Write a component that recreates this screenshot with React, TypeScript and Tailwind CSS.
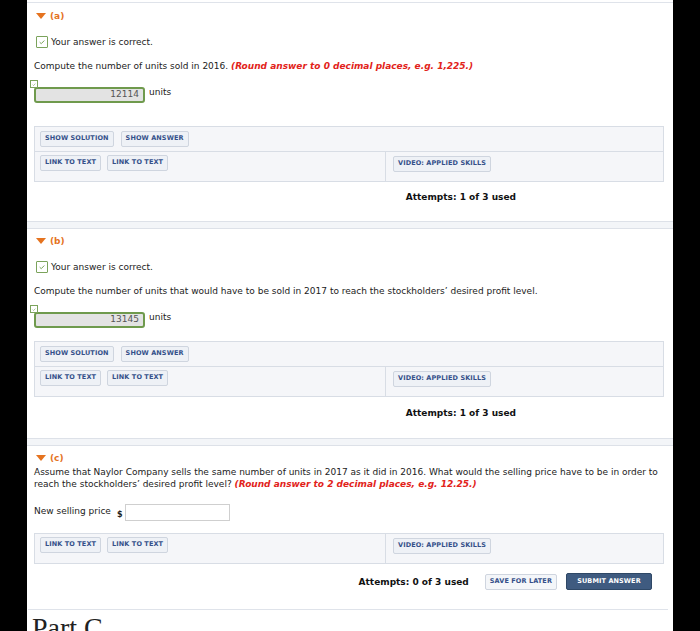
import React from 'react';

// small gray-blue action button
const Btn = ({ children, className = '' }: { children: React.ReactNode; className?: string }) => (
    <div className={`h-[16px] px-[4px] flex items-center rounded-[2px] border border-[#cfd5df] bg-[#eef1f6] text-[#34508a] font-bold text-[6.5px] tracking-[0.1px] whitespace-nowrap ${className}`}>
        {children}
    </div>
);

const Check = ({ size }: { size: number }) => (
    <svg width={size} height={size} viewBox="0 0 12 12" className="block">
        <path d="M3.2 6.2 L5.1 8 L8.8 4.2" fill="none" stroke="#6d9a4b" strokeWidth="1.1" />
    </svg>
);

const Header = ({ label }: { label: string }) => (
    <div className="h-[12px] flex items-center gap-[4px] pl-[2px]">
        <div className="w-0 h-0 border-l-[5px] border-r-[5px] border-t-[6px] border-l-transparent border-r-transparent border-t-[#e5731f]"></div>
        <span className="text-[9px] font-bold text-[#e5731f] leading-[12px]">{label}</span>
    </div>
);

const Correct = () => (
    <div className="mt-[13px] h-[13px] flex items-center gap-[3px] pl-[2px]">
        <div className="w-[12px] h-[12px] border border-[#7ba35b] bg-white rounded-[1px] flex items-center justify-center">
            <Check size={10} />
        </div>
        <span className="text-[9px] leading-[12px] text-[#222]">Your answer is correct.</span>
    </div>
);

const AnswerBox = ({ value }: { value: string }) => (
    <div className="mt-[8px] flex items-start">
        <div className="relative pt-[7px]">
            <div className="absolute -left-[4px] top-0 w-[8px] h-[8px] border border-[#7ba35b] bg-white flex items-center justify-center">
                <Check size={7} />
            </div>
            <div className="w-[111px] h-[16px] rounded-[3px] border-2 border-[#6f9a4d] bg-[#e3e3e3] flex items-center justify-end pr-[4px] text-[9px] text-[#555]">
                {value}
            </div>
        </div>
        <span className="ml-[4px] mt-[6px] text-[9px] leading-[12px] text-[#222]">units</span>
    </div>
);

const LinkRow = () => (
    <div className="flex h-[29px]">
        <div className="w-[351px] border-r border-[#d8dde5] flex items-start gap-[6px] pl-[5px] pt-[3px]">
            <Btn>LINK TO TEXT</Btn>
            <Btn>LINK TO TEXT</Btn>
        </div>
        <div className="flex-1 pl-[7px] pt-[4px] flex items-start">
            <Btn>VIDEO: APPLIED SKILLS</Btn>
        </div>
    </div>
);

const Separator = ({ mt }: { mt: string }) => (
    <div className={`${mt} -ml-[7px] h-[8px] border-y border-[#dde1e8] bg-[#f3f5f8]`}></div>
);

const Red = ({ children }: { children: React.ReactNode }) => (
    <span className="font-bold italic text-[#e2231a]">{children}</span>
);

const AnsweredPart = ({ label, question, value, panelMt, attemptsMt, sepMt }: { label: string; question: React.ReactNode; value: string; panelMt: string; attemptsMt: string; sepMt: string }) => (
    <div>
        <Header label={label} />
        <Correct />
        <div className="mt-[12px] h-[12px] text-[9px] leading-[12px] text-[#222] whitespace-nowrap">{question}</div>
        <AnswerBox value={value} />
        {/* solution panel */}
        <div className={`${panelMt} mr-[9px] border border-[#d8dde5] bg-[#f5f6f9]`}>
            <div className="h-[25px] flex items-start gap-[7px] pl-[5px] pt-[4px] border-b border-[#d8dde5]">
                <Btn>SHOW SOLUTION</Btn>
                <Btn>SHOW ANSWER</Btn>
            </div>
            <LinkRow />
        </div>
        <div className={`${attemptsMt} h-[12px] flex justify-end mr-[157px]`}>
            <span className="text-[9px] font-bold leading-[12px] text-[#111]">Attempts: 1 of 3 used</span>
        </div>
        <Separator mt={sepMt} />
    </div>
);

export default function App() {
    return (
        <div className="w-[700px] h-[631px] bg-black overflow-hidden flex font-['DejaVu_Sans',sans-serif]">
            <div className="ml-[27px] w-[646px] h-full bg-white pl-[7px]">
                <div className="-ml-[7px] h-[3px] border-b border-[#dfe3ea]"></div>
                <div className="pt-[7px]">
                    <AnsweredPart
                        label="(a)"
                        value="12114"
                        panelMt="mt-[23px]"
                        attemptsMt="mt-[9px]"
                        sepMt="mt-[18px]"
                        question={<>Compute the number of units sold in 2016. <Red>(Round answer to 0 decimal places, e.g. 1,225.)</Red></>}
                    />
                </div>
                <div className="pt-[6px]">
                    <AnsweredPart
                        label="(b)"
                        value="13145"
                        panelMt="mt-[13px]"
                        attemptsMt="mt-[10px]"
                        sepMt="mt-[19px]"
                        question={<>Compute the number of units that would have to be sold in 2017 to reach the stockholders’ desired profit level.</>}
                    />
                </div>
                {/* part c */}
                <div className="pt-[6px]">
                    <Header label="(c)" />
                    <p className="mt-[2px] text-[9px] leading-[12px] text-[#222]">
                        Assume that Naylor Company sells the same number of units in 2017 as it did in 2016. What would the selling price have to be in order to<br />
                        reach the stockholders’ desired profit level? <Red>(Round answer to 2 decimal places, e.g. 12.25.)</Red>
                    </p>
                    <div className="mt-[14px] h-[17px] flex items-start">
                        <span className="mt-[1px] text-[9px] leading-[12px] text-[#222]">New selling price</span>
                        <span className="ml-[6px] mt-[6px] text-[8px] font-bold leading-[10px] text-[#222]">$</span>
                        <div className="ml-[3px] w-[105px] h-[17px] border border-[#cfcfcf] bg-white"></div>
                    </div>
                    <div className="mt-[12px] mr-[9px] border border-[#d8dde5] bg-[#f5f6f9]">
                        <LinkRow />
                    </div>
                    <div className="mt-[9px] h-[17px] flex items-center justify-end mr-[21px]">
                        <span className="text-[9px] font-bold leading-[12px] text-[#111]">Attempts: 0 of 3 used</span>
                        <Btn className="ml-[16px] h-[15px] bg-[#f4f6f9]">SAVE FOR LATER</Btn>
                        <div className="ml-[9px] h-[17px] w-[86px] flex items-center justify-center rounded-[2px] border border-[#2f4866] bg-[#3f5b80] text-white font-bold text-[6.5px] tracking-[0.1px]">
                            SUBMIT ANSWER
                        </div>
                    </div>
                    <div className="mt-[19px] -ml-[6px] mr-[5px] border-t border-[#dfe3ea]"></div>
                    <div className="mt-[4px] -ml-[2px] text-[28px] leading-none text-[#222] font-['Liberation_Serif',serif]">Part C</div>
                </div>
            </div>
        </div>
    );
}
